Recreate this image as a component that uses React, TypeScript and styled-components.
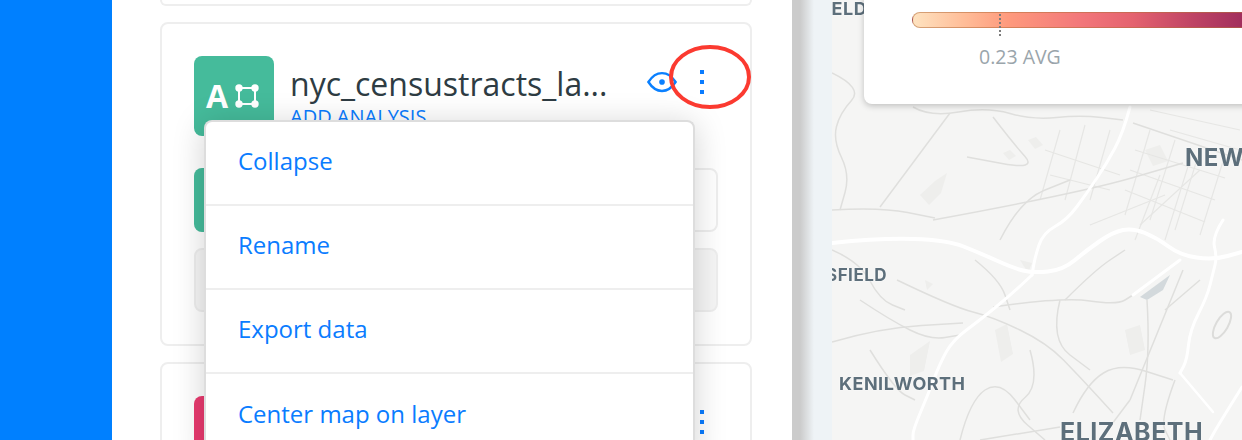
import React from 'react'
import styled, { createGlobalStyle } from 'styled-components'

const GlobalStyle = createGlobalStyle`
  html, body {
    margin: 0;
    padding: 0;
    background: #fff;
    font-family: 'Open Sans', 'Liberation Sans', sans-serif;
  }
`

const Page = styled.div`
  display: flex;
  width: 1242px;
  height: 440px;
  overflow: hidden;
`

const Rail = styled.div`
  width: 112px;
  flex-shrink: 0;
  background: #0080ff;
`

const Panel = styled.div`
  width: 680px;
  flex-shrink: 0;
  box-sizing: border-box;
  padding: 0 40px 0 48px;
  display: flex;
  flex-direction: column;
  gap: 16px;
  background: #fff;
`

const StubCard = styled.div`
  height: 6px;
  flex-shrink: 0;
  box-sizing: border-box;
  border: 2px solid #eee;
  border-top: none;
  border-radius: 0 0 8px 8px;
`

const Card = styled.div`
  position: relative;
  flex-shrink: 0;
  box-sizing: border-box;
  border: 2px solid #eee;
  border-radius: 8px;
  padding: 32px;
  display: flex;
  flex-direction: column;
  gap: 32px;
`

const Header = styled.div`
  display: flex;
  align-items: flex-start;
  height: 80px;
`

const Tile = styled.div<{ $color: string }>`
  width: 80px;
  height: 80px;
  flex-shrink: 0;
  box-sizing: border-box;
  padding: 0 0 28px 12px;
  border-radius: 8px;
  background: ${({ $color }) => $color};
  color: #fff;
  display: flex;
  align-items: flex-end;
  gap: 7px;
`

const TileLetter = styled.span`
  font-size: 32px;
  font-weight: 700;
  line-height: 24px;
`

const TileGlyph = styled.svg`
  display: block;
`

const Titles = styled.div`
  margin-left: 16px;
  flex: 1;
  min-width: 0;
`

const Title = styled.div`
  font-size: 32px;
  line-height: 40px;
  margin-top: 8px;
  color: #2e3c43;
  white-space: nowrap;
`

const AddAnalysis = styled.div`
  font-size: 20px;
  line-height: 24px;
  margin-top: 1px;
  color: #0a7cff;
`

const Actions = styled.div`
  display: flex;
  align-items: center;
  gap: 23px;
  margin-top: 14px;
  margin-right: 14px;
`

const Dots = styled.div`
  display: flex;
  flex-direction: column;
  gap: 6px;
`

const Dot = styled.span`
  width: 4px;
  height: 4px;
  background: #0a7cff;
`

const LayerList = styled.div`
  display: flex;
  flex-direction: column;
  gap: 16px;
`

const LayerRow = styled.div<{ $muted?: boolean }>`
  height: 64px;
  box-sizing: border-box;
  border: 2px solid #eee;
  border-radius: 8px;
  background: ${({ $muted }) => ($muted ? '#f6f6f6' : '#fff')};
`

const RowCap = styled.div`
  width: 64px;
  height: 64px;
  margin: -2px;
  border-radius: 8px 0 0 8px;
  background: #45bb9b;
`

const Menu = styled.div`
  position: absolute;
  top: 96px;
  left: 42px;
  width: 491px;
  box-sizing: border-box;
  background: #fff;
  border: 2px solid #ddd;
  border-bottom: none;
  border-radius: 8px 8px 0 0;
  box-shadow: 0 4px 32px rgba(0, 0, 0, 0.18);
  z-index: 5;
`

const MenuItem = styled.div`
  height: 84px;
  box-sizing: border-box;
  padding: 0 32px 5px;
  display: flex;
  align-items: center;
  font-size: 24px;
  color: #0a7cff;
  border-bottom: 2px solid #eee;
  &:last-child {
    border-bottom: none;
  }
`

const Highlight = styled.svg`
  position: absolute;
  top: 19px;
  left: 506px;
  z-index: 6;
`

const Gutter = styled.div`
  width: 40px;
  flex-shrink: 0;
  background: linear-gradient(90deg, #cbcbcb 0, #cbcbcb 8px, #eef3f6 22px, #eef3f6 100%);
`

const MapArea = styled.div`
  position: relative;
  flex: 1;
  overflow: hidden;
  background: #f5f5f4;
`

const MapDrawing = styled.svg`
  display: block;
  filter: blur(0.7px);
`

const Place = styled.span<{ $size: number }>`
  position: absolute;
  font-family: 'Inter', 'Liberation Sans', sans-serif;
  font-weight: 700;
  font-size: ${({ $size }) => $size}px;
  line-height: 1;
  letter-spacing: 0.5px;
  color: #5d6f7b;
  white-space: nowrap;
  text-shadow: 0 0 2px #fff;
  filter: blur(0.5px);
`

const Legend = styled.div`
  position: absolute;
  top: -20px;
  left: 32px;
  width: 480px;
  height: 124px;
  background: #fff;
  border-radius: 8px;
  box-shadow: 0 2px 6px rgba(0, 0, 0, 0.22);
`

const Ramp = styled.div`
  position: absolute;
  top: 32px;
  left: 48px;
  width: 340px;
  height: 16px;
  box-sizing: border-box;
  border: 1px solid rgba(180, 110, 60, 0.55);
  border-right: none;
  border-radius: 8px 0 0 8px;
  background: linear-gradient(90deg, #fee3c0 0, #ffbd98 15%, #fe9a7d 28%, #f2767a 50%, #e4626f 65%, #c04465 82%, #9c2a5b 100%);
`

const AvgTick = styled.div`
  position: absolute;
  top: 34px;
  left: 135px;
  height: 22px;
  border-left: 2px dotted #7c7c7c;
`

const AvgLabel = styled.div`
  position: absolute;
  top: 65px;
  left: 115px;
  font-size: 19.5px;
  line-height: 24px;
  color: #9aa5ab;
`

const smooth = (pts: number[][]) => {
  let d = `M${pts[0][0]} ${pts[0][1]}`
  for (let i = 1; i < pts.length - 1; i++) {
    const mx = (pts[i][0] + pts[i + 1][0]) / 2
    const my = (pts[i][1] + pts[i + 1][1]) / 2
    d += ` Q${pts[i][0]} ${pts[i][1]} ${mx} ${my}`
  }
  const last = pts[pts.length - 1]
  return `${d} L${last[0]} ${last[1]}`
}

const highways: [number, number[][]][] = [
  [4, [[832, 243], [880, 238], [947, 240], [980, 253], [1013, 268], [1033, 273], [1063, 270], [1087, 250], [1113, 232], [1133, 228], [1157, 238], [1180, 255], [1213, 260], [1242, 252]]],
  [3, [[1130, 107], [1123, 133], [1107, 163], [1087, 193], [1067, 220], [1043, 233], [1035, 257], [1032, 275]]],
  [3, [[1032, 275], [1013, 293], [980, 320], [953, 340], [940, 363], [927, 397], [913, 430], [913, 440]]],
  [3, [[1223, 220], [1212, 237], [1217, 257], [1213, 273], [1207, 297], [1190, 330], [1187, 360], [1180, 373]]],
  [2.5, [[1180, 373], [1197, 393], [1213, 412]]],
  [3, [[1242, 387], [1217, 427], [1210, 440]]],
  [3, [[1133, 295], [1180, 260]]],
]

const minorRoads: number[][][] = [
  [[832, 342], [880, 328], [963, 323]],
  [[897, 280], [953, 307], [993, 317], [1047, 343], [1080, 377], [1113, 413]],
  [[993, 307], [1063, 297], [1117, 305], [1133, 295]],
  [[1073, 413], [1087, 383], [1120, 363], [1173, 380]],
  [[1130, 400], [1183, 270]],
  [[1100, 440], [1130, 400]],
  [[980, 440], [1060, 427]],
  [[832, 73], [863, 88], [840, 113], [833, 140], [850, 175], [840, 210]],
  [[913, 107], [930, 117], [987, 107], [1033, 120], [1080, 115], [1123, 120]],
  [[950, 113], [880, 207]],
  [[993, 117], [1013, 143], [1037, 170], [967, 157]],
  [[933, 220], [1080, 193], [1183, 163]],
  [[1133, 123], [1242, 160]],
  [[832, 210], [880, 207], [935, 218]],
  [[960, 440], [970, 400], [1000, 380], [1030, 420]],
  [[860, 300], [890, 320], [930, 340], [960, 335]],
  [[1000, 240], [1020, 200], [1070, 180]],
  [[1060, 300], [1050, 340], [1090, 370]],
  [[1030, 350], [1040, 385], [1010, 410], [1045, 440]],
  [[1147, 300], [1150, 350], [1140, 420]],
  [[832, 250], [860, 262], [880, 300], [905, 310]],
  [[870, 350], [895, 390], [915, 400]],
  [[975, 260], [1000, 280], [1010, 310]],
  [[1065, 300], [1095, 270], [1125, 250]],
  [[1165, 310], [1200, 280]],
  [[1175, 380], [1160, 420], [1170, 440]],
]

const cityGrid: string[] = [
  'M1060 130 L1040 200', 'M1085 125 L1065 200', 'M1110 130 L1090 200', 'M1150 130 L1125 215',
  'M1175 140 L1150 220', 'M1200 150 L1175 230', 'M1225 155 L1200 235', 'M1045 150 L1120 175',
  'M1050 175 L1110 190', 'M1130 170 L1215 200', 'M1125 190 L1205 222', 'M1150 110 L1240 130',
  'M1090 225 L1165 195', 'M1170 130 L1240 150', 'M1140 225 L1200 170', 'M1160 175 L1135 240',
  'M1190 160 L1165 240', 'M1135 150 L1225 178',
]

const parks: string[] = [
  'M1028 140 l8 -3 l7 8 l-8 4 z', 'M1003 153 l7 -3 l6 6 l-7 4 z', 'M920 195 l15 -14 l12 -8 l-6 20 l-12 12 z',
  'M910 355 l20 -14 l-6 30 l-14 5 z', 'M995 330 l12 -6 l6 30 l-12 8 z', 'M1145 150 l15 -5 l8 16 l-15 5 z',
  'M1125 330 l15 -5 l5 25 l-15 5 z', 'M1020 260 l12 3 l-4 10 z', 'M925 280 l8 4 l-6 6 z',
]

const LayerCard: React.FC = () => (
  <Card>
    <Header>
      <Tile $color="#45bb9b">
        <TileLetter>A</TileLetter>
        <TileGlyph width="24" height="24" viewBox="0 0 24 24">
          <rect x="4" y="4" width="16" height="16" fill="none" stroke="#fff" strokeWidth="2" />
          <circle cx="4" cy="4" r="3.7" fill="#fff" />
          <circle cx="20" cy="4" r="3.7" fill="#fff" />
          <circle cx="4" cy="20" r="3.7" fill="#fff" />
          <circle cx="20" cy="20" r="3.7" fill="#fff" />
        </TileGlyph>
      </Tile>
      <Titles>
        <Title>nyc_censustracts_la...</Title>
        <AddAnalysis>ADD ANALYSIS</AddAnalysis>
      </Titles>
      <Actions>
        <svg width="30" height="22" viewBox="0 0 32 22">
          <path
            d="M1.5 11 C6 4 11 1.5 16 1.5 C21 1.5 26 4 30.5 11 C26 18 21 20.5 16 20.5 C11 20.5 6 18 1.5 11 Z"
            fill="none"
            stroke="#0a80ff"
            strokeWidth="2.6"
          />
          <circle cx="16" cy="11" r="3" fill="#0a80ff" />
        </svg>
        <Dots>
          <Dot />
          <Dot />
          <Dot />
        </Dots>
      </Actions>
    </Header>
    <LayerList>
      <LayerRow>
        <RowCap />
      </LayerRow>
      <LayerRow $muted />
    </LayerList>
    <Menu>
      {['Collapse', 'Rename', 'Export data', 'Center map on layer'].map(label => (
        <MenuItem key={label}>{label}</MenuItem>
      ))}
    </Menu>
    <Highlight width="84" height="68" viewBox="0 0 84 68">
      <ellipse cx="42" cy="34" rx="39" ry="30" fill="none" stroke="#fb3a30" strokeWidth="4" />
    </Highlight>
  </Card>
)

const PinkCard: React.FC = () => (
  <Card>
    <Header>
      <Tile $color="#e93a6f" />
      <Titles />
      <Actions>
        <Dots>
          <Dot />
          <Dot />
          <Dot />
        </Dots>
      </Actions>
    </Header>
  </Card>
)

const App: React.FC = () => (
  <>
    <GlobalStyle />
    <Page>
      <Rail />
      <Panel>
        <StubCard />
        <LayerCard />
        <PinkCard />
      </Panel>
      <Gutter />
      <MapArea>
        <MapDrawing width="410" height="440" viewBox="832 0 410 440">
          {parks.map((d, i) => (
            <path key={i} d={d} fill="#eeeeec" />
          ))}
          {cityGrid.map((d, i) => (
            <path key={i} d={d} fill="none" stroke="#e6e6e4" strokeWidth="1.2" />
          ))}
          {minorRoads.map((pts, i) => (
            <path key={i} d={smooth(pts)} fill="none" stroke="#dfdfdd" strokeWidth="1.5" />
          ))}
          <path d="M1140 297 L1170 275 L1163 290 L1147 300 Z" fill="#d3d9dc" />
          <ellipse cx="1222" cy="325" rx="6" ry="15" transform="rotate(30 1222 325)" fill="none" stroke="#dcdcda" strokeWidth="2" />
          {highways.map(([w, pts], i) => (
            <path key={i} d={smooth(pts)} fill="none" stroke="#fff" strokeWidth={w} strokeLinecap="round" />
          ))}
        </MapDrawing>
        <Place $size={18} style={{ top: 0, left: -17 }}>FIELD</Place>
        <Place $size={24} style={{ top: 146, left: 353 }}>NEW</Place>
        <Place $size={17} style={{ top: 267, left: -6 }}>SFIELD</Place>
        <Place $size={18} style={{ top: 375, left: 7 }}>KENILWORTH</Place>
        <Place $size={25} style={{ top: 420, left: 228 }}>ELIZABETH</Place>
        <Legend>
          <Ramp />
          <AvgTick />
          <AvgLabel>0.23 AVG</AvgLabel>
        </Legend>
      </MapArea>
    </Page>
  </>
)

export default App
